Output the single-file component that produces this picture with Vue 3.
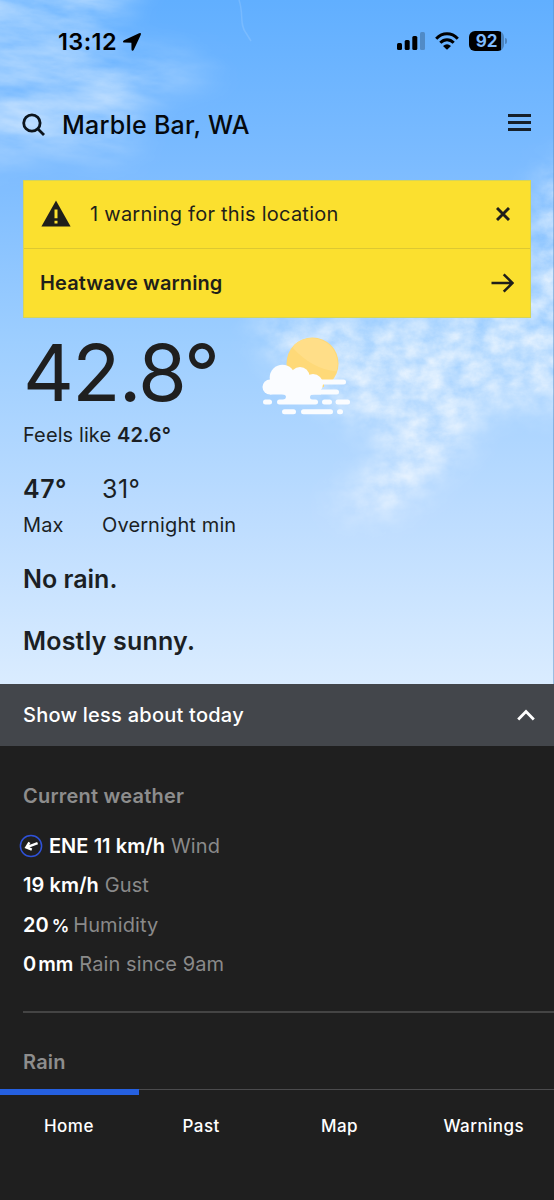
<script setup>
import { ref } from "vue";

// header info
const place = ref("Marble Bar, WA");
const expanded = ref(true); // today details open or closed

// current observations list
const observations = [
  { value: "ENE 11 km/h", label: "Wind", icon: true, key: "wind" },
  { value: "19 km/h", label: "Gust", key: "gust" },
  { value: "20", unit: "%", label: "Humidity", key: "humidity" },
  { value: "0", unit: "mm", label: "Rain since 9am", key: "rain" },
];

// bottom tabs
const tabs = ["Home", "Past", "Map", "Warnings"];
const activeTab = ref("Home");
</script>

<template>
  <div class="app">
    <section class="sky">
      <!-- clouds behind the content -->
      <svg class="clouds" width="554" height="684" viewBox="0 0 554 684">
        <defs>
          <filter id="streaks" x="0" y="0" width="100%" height="100%" color-interpolation-filters="sRGB">
            <feTurbulence type="fractalNoise" baseFrequency="0.011 0.038" numOctaves="6" seed="21" />
            <feColorMatrix values="0 0 0 0 1  0 0 0 0 1  0 0 0 0 1  1.1 0 0 0 -0.17" />
          </filter>
          <filter id="puffs" x="0" y="0" width="100%" height="100%" color-interpolation-filters="sRGB">
            <feTurbulence type="fractalNoise" baseFrequency="0.045 0.06" numOctaves="5" seed="12" />
            <feColorMatrix values="0 0 0 0 1  0 0 0 0 1  0 0 0 0 1  1.25 0 0 0 -0.08" />
          </filter>
          <filter id="soft" x="-30%" y="-30%" width="160%" height="160%">
            <feGaussianBlur stdDeviation="17" />
          </filter>
          <mask id="leftMask" maskUnits="userSpaceOnUse" x="0" y="0" width="554" height="684">
            <path d="M-60 -50 H150 L100 50 L225 62 L140 100 L130 155 L60 150 L-60 168Z" fill="#fff" fill-opacity="0.78" filter="url(#soft)" />
          </mask>
          <mask id="rightMask" maskUnits="userSpaceOnUse" x="0" y="0" width="554" height="684">
            <path d="M640 130 L545 175 L520 300 L250 320 L290 375 L335 405 L390 440 L370 475 L325 508 L390 515 L450 465 L490 405 L640 410Z" fill="#fff" fill-opacity="0.76" filter="url(#soft)" />
          </mask>
        </defs>
        <g mask="url(#leftMask)">
          <rect x="-100" y="-100" width="500" height="360" transform="rotate(5)" filter="url(#streaks)" />
        </g>
        <g mask="url(#rightMask)">
          <rect x="200" y="100" width="354" height="450" filter="url(#puffs)" />
        </g>
        <path d="M239 0 C244 14 239 24 246 33 L251 41" fill="none" stroke="#fff" stroke-opacity="0.13" stroke-width="1.5" />
        <path d="M553.5 0 V684" stroke="#5a8fc4" stroke-opacity="0.5" />
      </svg>

      <div class="content">
        <!-- status bar -->
        <div class="status">
          <span class="time">13:12</span>
          <svg class="location" width="20" height="20" viewBox="0 0 20 20">
            <path d="M18.8 1.2 Q19.2 1.8 18.7 2.9 L11.8 17.8 Q11.2 19 10.3 18.8 Q9.5 18.6 9.5 17.5 L9.4 10.8 L2.4 10.6 Q1.1 10.5 1 9.7 Q0.9 8.9 2.1 8.3 L17.1 1.3 Q18.3 0.7 18.8 1.2Z" />
          </svg>
          <div class="status-right">
            <svg width="28" height="18" viewBox="0 0 28 18">
              <rect x="0" y="11" width="5" height="7" rx="1.5" />
              <rect x="7.7" y="8" width="5" height="10" rx="1.5" />
              <rect x="15.3" y="4" width="5" height="14" rx="1.5" />
              <rect x="23" y="0" width="5" height="18" rx="1.5" opacity="0.22" />
            </svg>
            <svg class="wifi" width="24" height="18" viewBox="0 0 24 18">
              <g fill="none" stroke="#000" stroke-width="3">
                <path d="M1.2 6.7 Q6 1.8 12 1.8 T22.8 6.7" />
                <path d="M5.3 10.8 Q8.3 7.8 12 7.8 T18.7 10.8" />
              </g>
              <path d="M8 14 Q12 10.5 16 14 L12.6 17.3 Q12 17.8 11.4 17.3Z" />
            </svg>
            <div class="battery"><span>92</span></div>
            <i class="battery-cap"></i>
          </div>
        </div>

        <!-- search and menu -->
        <header class="header">
          <svg class="search" width="24" height="24" viewBox="0 0 24 24" fill="none" stroke="#0c141c" stroke-width="2.8">
            <circle cx="9.9" cy="10" r="8.2" />
            <path d="M15.7 15.8 L22 22" />
          </svg>
          <h1>{{ place }}</h1>
          <div class="menu"><i></i><i></i><i></i></div>
        </header>

        <!-- warning banner -->
        <div class="banner">
          <div class="banner-row first">
            <svg class="alert" width="30" height="27" viewBox="0 0 30 27">
              <path d="M15 0.6 L29.6 26.4 H0.4Z" fill="#1f1f1a" />
              <path d="M15 9.6 V18.2 M15 20.7 V23.4" stroke="#fbe02f" stroke-width="3" />
            </svg>
            <span class="count">1 warning for this location</span>
            <svg class="close" width="14" height="14" viewBox="0 0 14 14">
              <path d="M1 1 L13 13 M13 1 L1 13" stroke="#1f1f1a" stroke-width="2.9" />
            </svg>
          </div>
          <div class="banner-row">
            <span class="warning">Heatwave warning</span>
            <svg width="23" height="20" viewBox="0 0 23 20" fill="none" stroke="#1f1f1a" stroke-width="2.5">
              <path d="M0.5 10 H21 M12.7 1.3 L21.4 10 L12.7 18.7" />
            </svg>
          </div>
        </div>

        <!-- current temperature -->
        <div class="now">
          <div class="temp">42.8°</div>
          <svg class="weather" width="88" height="80" viewBox="0 0 88 80">
            <defs>
              <clipPath id="sunClip"><path d="M0 0 H88 V43 H69 V47 H62 V52 H20 V30Z" /></clipPath>
            </defs>
            <g clip-path="url(#sunClip)">
              <circle cx="50.5" cy="26.5" r="26" fill="#fed978" />
              <path d="M32 8 A26 26 0 0 1 74.5 34.5 Q50 32 31 11Z" fill="#ffde88" />
            </g>
            <g fill="#fafcff">
              <circle cx="20.5" cy="40.5" r="12.8" />
              <circle cx="8" cy="50" r="7.5" />
              <circle cx="38" cy="39.5" r="9.5" />
              <circle cx="51" cy="47" r="10" />
              <path d="M8 44 L20 36 H40 L51 43 L59 52 V57.5 H8Z" />
              <rect x="54" y="42.5" width="30" height="5" rx="2.5" />
              <rect x="48" y="52.5" width="29" height="5" rx="2.5" />
              <path d="M20 57 H52 Q48 57.5 48 60 Q48 62.5 51 63 H21 Q24 62 24 60 Q24 57.5 20 57Z" />
              <rect x="1" y="62.5" width="9" height="5" rx="2.5" />
              <rect x="15" y="62.5" width="41" height="5" rx="2.5" />
              <rect x="60" y="62.5" width="10" height="5" rx="2.5" />
              <rect x="73.5" y="62.5" width="14.5" height="5" rx="2.5" />
              <rect x="20" y="72.2" width="14" height="5" rx="2.5" />
              <rect x="39" y="72.2" width="32" height="5" rx="2.5" />
              <rect x="75" y="72.2" width="6" height="5" rx="2.5" />
            </g>
          </svg>
        </div>
        <p class="feels">Feels like <b>42.6°</b></p>

        <div class="range">
          <div class="max">
            <b>47°</b>
            <span>Max</span>
          </div>
          <div class="min">
            <em>31°</em>
            <span>Overnight min</span>
          </div>
        </div>

        <p class="summary">No rain.</p>
        <p class="summary sunny">Mostly sunny.</p>
      </div>
    </section>

    <!-- toggle for today details -->
    <button class="toggle" @click="expanded = !expanded">
      <span>{{ expanded ? "Show less about today" : "Show more about today" }}</span>
      <svg width="18" height="12" viewBox="0 0 18 12">
        <path d="M1.2 10.4 L9 2.4 L16.8 10.4" fill="none" stroke="#fff" stroke-width="2.8" />
      </svg>
    </button>

    <section v-if="expanded" class="details">
      <h2>Current weather</h2>
      <ul>
        <li v-for="item in observations" :key="item.key" :class="item.key">
          <!-- wind direction -->
          <svg v-if="item.icon" width="24" height="24" viewBox="0 0 24 24">
            <circle cx="12" cy="12" r="10.6" fill="none" stroke="#2f52d8" stroke-width="1.5" />
            <path d="M18.6 9.2 L8 13.2 M10.4 8.4 L7.3 13.4 L12.8 15.6" fill="none" stroke="#fff" stroke-width="2.4" />
          </svg>
          <b>{{ item.value }}<small v-if="item.unit">{{ item.unit }}</small></b>
          <span>{{ item.label }}</span>
        </li>
      </ul>
      <hr />
      <h2 class="rain-title">Rain</h2>
    </section>

    <!-- bottom navigation -->
    <nav class="tabs">
      <a v-for="tab in tabs" :key="tab" :class="{ active: tab === activeTab }" @click="activeTab = tab">
        {{ tab }}
      </a>
    </nav>
  </div>
</template>

<style>
body {
  margin: 0;
  background: #1f1f1f;
}
</style>

<style scoped>
* {
  box-sizing: border-box;
}

.app {
  width: 554px;
  height: 1200px;
  display: flex;
  flex-direction: column;
  overflow: hidden;
  background: #1f1f1f;
  color: #1b1f24;
  font-family: Inter, "Liberation Sans", sans-serif;
}

svg {
  display: block;
  flex: none;
}

p,
h1,
h2,
ul {
  margin: 0;
  padding: 0;
}

/* sky area */
.sky {
  position: relative;
  height: 684px;
  flex: none;
  background: linear-gradient(#61afff 0, #7dbcff 25%, #9dceff 50%, #bcdcff 75%, #daecff 100%);
}

/* decorative layer under the content */
.clouds {
  position: absolute;
  top: 0;
  left: 0;
}

.content {
  position: relative;
  padding: 0 23px;
}

/* status bar */
.status {
  height: 83px;
  display: flex;
  align-items: center;
  padding-left: 35px;
}

.time {
  color: #000;
  font-size: 23.5px;
  font-weight: 600;
  letter-spacing: 0.4px;
  width: 64px;
  white-space: nowrap;
}

.status-right {
  margin-left: auto;
  margin-right: 24px;
  padding-bottom: 1px;
  display: flex;
  align-items: center;
}

.wifi {
  margin-left: 10px;
}

.battery {
  width: 35px;
  height: 20px;
  margin-left: 10px;
  border-radius: 6px;
  background: linear-gradient(90deg, #000 32px, #4c84be 32px);
  color: #7fbcff;
  font-size: 17px;
  font-weight: 700;
  line-height: 20px;
  text-align: center;
}

.battery-cap {
  width: 2px;
  height: 6px;
  margin-left: 1px;
  border-radius: 0 2px 2px 0;
  background: #4c84be;
}

/* header */
.header {
  height: 97px;
  display: flex;
  align-items: center;
  padding-bottom: 14px;
}

.search {
  margin-left: -1px;
}

.header h1 {
  margin-left: 16px;
  color: #05090d;
  font-size: 25px;
  font-weight: 500;
  letter-spacing: 0.25px;
}

.menu {
  width: 23px;
  margin-left: auto;
  display: flex;
  flex-direction: column;
  gap: 4px;
  padding-bottom: 4px;
}

.menu i {
  height: 3px;
  background: #16202a;
}

/* warning banner */
.banner {
  height: 138px;
  background: #fbe02f;
  border: 1px solid #d5d45a;
}

.banner-row {
  height: 69px;
  display: flex;
  align-items: center;
  justify-content: space-between;
  padding: 0 16px 2px;
  color: #1f1f1a;
}

.banner-row.first {
  height: 68px;
  border-bottom: 1px solid #ddc832;
  padding: 0 20px 2px 17px;
}

.count {
  flex: 1;
  margin-left: 19px;
  font-size: 20px;
  letter-spacing: 0.25px;
}

.warning {
  font-size: 20px;
  font-weight: 600;
  letter-spacing: 0.12px;
}

/* temperature */
.now {
  height: 102px;
  display: flex;
}

.temp {
  width: 239px;
  padding-top: 5px;
  font-size: 79px;
  line-height: 98px;
  letter-spacing: -1.7px;
  color: #1f1f1f;
}

.weather {
  margin-top: 18.5px;
}

.feels {
  padding-top: 2px;
  font-size: 20px;
  line-height: 26px;
  letter-spacing: 0.1px;
}

.feels b,
.max b {
  font-weight: 600;
}

.range {
  display: flex;
  padding-top: 23px;
}

.range > div {
  display: flex;
  flex-direction: column;
}

.max {
  width: 79px;
}

.range b,
.range em {
  font-size: 25px;
  font-style: normal;
  line-height: 36px;
  letter-spacing: 0.5px;
}

.range span {
  font-size: 20px;
  line-height: 36px;
  letter-spacing: 0.12px;
}

.summary {
  padding-top: 18px;
  font-size: 25px;
  font-weight: 600;
  line-height: 36px;
}

.sunny {
  padding-top: 26px;
  letter-spacing: 0.2px;
}

/* today toggle */
.toggle {
  height: 62px;
  flex: none;
  display: flex;
  align-items: center;
  justify-content: space-between;
  padding: 0 19px 0 23px;
  border: 0;
  background: #43464b;
  color: #fff;
  font-family: inherit;
  font-size: 20px;
  font-weight: 500;
  letter-spacing: 0.24px;
  cursor: pointer;
}

/* details list */
.details {
  flex: 1;
  padding: 38px 0 0 23px;
}

.details h2 {
  color: #8d8d8d;
  font-size: 20px;
  font-weight: 600;
  line-height: 24px;
  letter-spacing: 0.22px;
}

ul {
  list-style: none;
  padding-top: 18px;
}

li {
  height: 39.5px;
  display: flex;
  align-items: center;
  font-size: 20px;
}

li svg {
  margin: 0 6px 0 -4px;
}

li b {
  color: #fff;
  font-weight: 600;
  word-spacing: 0.2px;
}

/* unit sits close to its number */
li small {
  margin-left: 2px;
  font-size: 19.5px;
}

.humidity small {
  margin-left: 3px;
  font-size: 17.5px;
}

li span {
  margin-left: 6px;
  color: #8a8a8a;
  letter-spacing: 0.1px;
}

.humidity span {
  margin-left: 4px;
}

hr {
  height: 2px;
  margin: 27px 0 37px;
  border: 0;
  background: #444;
}

/* bottom tabs */
.tabs {
  height: 111px;
  flex: none;
  display: flex;
  border-top: 1px solid #4b4b4d;
}

.tabs a {
  width: 138.5px;
  height: 72px;
  padding-left: 44px;
  color: #fff;
  font-size: 17px;
  font-weight: 500;
  line-height: 72px;
  letter-spacing: 0.45px;
  cursor: pointer;
}

.tabs a:last-child {
  padding-left: 28px;
}

.tabs a.active {
  margin-top: -1px;
  border-top: 6px solid #2560e0;
  line-height: 62px;
}
</style>
